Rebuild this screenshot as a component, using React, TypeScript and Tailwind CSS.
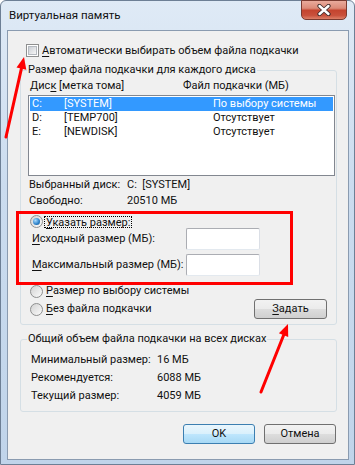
import React from 'react'

function U({ children }: { children: React.ReactNode }) {
  return <span className="underline underline-offset-[2px] decoration-[1px]">{children}</span>
}

function Checkbox() {
  return (
    <span className="w-[13px] h-[13px] shrink-0 border border-[#8e8f8f] bg-white p-[1px]">
      <span className="block w-full h-full border border-[#b4b9bf] bg-[linear-gradient(135deg,#cbcfd5,#f6f6f6)]" />
    </span>
  )
}

function Radio({ checked = false }: { checked?: boolean }) {
  return (
    <span className="w-[13px] h-[13px] shrink-0 rounded-full border border-[#8e8f8f] bg-[linear-gradient(135deg,#d2d2d2,#fbfbfb)] flex items-center justify-center">
      {checked && (
        <span className="w-[7px] h-[7px] rounded-full bg-[radial-gradient(circle_at_35%_35%,#a9dcff,#2a7fc8_60%,#17507f)]" />
      )}
    </span>
  )
}

function Btn({ children, primary = false, className = '' }: { children: React.ReactNode; primary?: boolean; className?: string }) {
  return (
    <div
      className={
        (primary
          ? 'border-[#3c7fb1] bg-[linear-gradient(to_bottom,#eaf6fd_0%,#d9f0fc_50%,#bee6fd_51%,#a7d9f5_100%)] '
          : 'border-[#707070] bg-[linear-gradient(to_bottom,#f2f2f2_0%,#ebebeb_50%,#dddddd_51%,#cfcfcf_100%)] ') +
        'h-[20px] rounded-[3px] border flex items-center justify-center ' +
        className
      }
    >
      <span>{children}</span>
    </div>
  )
}

function Input() {
  return <div className="w-[74px] h-[22px] shrink-0 rounded-[2px] border border-[#abadb3] border-b-[#e3e9ef] border-r-[#dbdfe6] bg-white" />
}

export default function App() {
  const drives = [
    { d: 'C:', label: '[SYSTEM]', file: 'По выбору системы', sel: true },
    { d: 'D:', label: '[TEMP700]', file: 'Отсутствует', sel: false },
    { d: 'E:', label: '[NEWDISK]', file: 'Отсутствует', sel: false },
  ]

  return (
    <div className="relative w-[355px] h-[465px] overflow-hidden whitespace-nowrap font-['Roboto','Noto_Sans',sans-serif] text-[11px] leading-[14px] text-[#111] bg-white">
      <div className="w-full h-full flex flex-col rounded-t-[6px] border border-[#6d7f95] bg-[linear-gradient(to_bottom,#dfeaf6,#cbdcef_40%,#c0d4ea)]">
        {/* title bar */}
        <div className="h-[29px] shrink-0 flex items-start justify-between">
          <span className="mt-[7px] ml-[8px] text-[11.5px]">Виртуальная память</span>
          <div className="-mt-[1px] mr-[7px] w-[46px] h-[20px] rounded-b-[5px] border border-[#7a3a30] bg-[linear-gradient(to_bottom,#e9aa9c,#dc8a78_40%,#c4442f_52%,#c9513c_80%,#dd8068)] flex items-center justify-center">
            <svg width="14" height="12" viewBox="0 0 14 12">
              <path d="M2.5 2 L11.5 10 M11.5 2 L2.5 10" stroke="#3d2a2a" strokeWidth="4.2" strokeLinecap="round" />
              <path d="M2.5 2 L11.5 10 M11.5 2 L2.5 10" stroke="#ffffff" strokeWidth="2.4" strokeLinecap="round" />
            </svg>
          </div>
        </div>

        {/* client area */}
        <div className="ml-[6px] w-[342px] h-[430px] border border-[#8a9bb0] bg-[#f0f0f0] pl-[12px] pr-[11px] flex flex-col">
          <div className="mt-[13px] ml-[6px] h-[13px] flex items-center gap-[3px]">
            <Checkbox />
            <span>
              <U>А</U>втоматически выбирать объем файла подкачки
            </span>
          </div>

          {/* per-disk group */}
          <fieldset className="mt-[6px] m-0 p-0 pb-[5px] min-w-0 border border-[#d5dfe5] rounded-[3px]">
            <legend className="ml-[6px] px-[1px] leading-[14px]">Размер файла подкачки для каждого диска</legend>

            <div className="mt-[2px] ml-[9px] h-[14px] flex">
              <span className="w-[153px] shrink-0">
                Дис<U>к</U> [метка тома]
              </span>
              <span>Файл подкачки (МБ)</span>
            </div>

            <div className="mt-[2px] ml-[7px] w-[307px] h-[81px] border border-[#828790] bg-white pt-[1px] px-[1px]">
              {drives.map((r) => (
                <div
                  key={r.d}
                  className={(r.sel ? 'bg-[#3399ff] text-white ' : '') + 'h-[14px] pl-[2px] flex items-center'}
                >
                  <span className="w-[32px] shrink-0">{r.d}</span>
                  <span className="w-[149px] shrink-0">{r.label}</span>
                  <span>{r.file}</span>
                </div>
              ))}
            </div>

            <div className="mt-[1px] ml-[8px] h-[16px] flex items-center">
              <span className="w-[98px] shrink-0">Выбранный диск:</span>
              <span>C:&nbsp;&nbsp;[SYSTEM]</span>
            </div>
            <div className="ml-[8px] h-[16px] flex items-center">
              <span className="w-[98px] shrink-0">Свободно:</span>
              <span>20510 МБ</span>
            </div>

            <div className="mt-[6px] ml-[9px] h-[13px] flex items-center gap-[1px]">
              <Radio checked />
              <span className="border border-dotted border-black px-[1px] leading-[11px] h-[12px]">
                <U>У</U>казать размер:
              </span>
            </div>
            <div className="ml-[11px] h-[22px] flex items-center">
              <span className="w-[154px] shrink-0">
                <U>И</U>сходный размер (МБ):
              </span>
              <Input />
            </div>
            <div className="mt-[4px] ml-[11px] h-[22px] flex items-center">
              <span className="w-[154px] shrink-0">
                <U>М</U>аксимальный размер (МБ):
              </span>
              <Input />
            </div>

            <div className="mt-[8px] ml-[9px] h-[14px] flex items-center gap-[3px]">
              <Radio />
              <span>
                <U>Р</U>азмер по выбору системы
              </span>
            </div>
            <div className="mt-[1px] ml-[9px] mr-[9px] h-[20px] flex items-center justify-between">
              <div className="flex items-center gap-[3px]">
                <Radio />
                <span>
                  <U>Б</U>ез файла подкачки
                </span>
              </div>
              <Btn className="w-[73px]">
                <U>З</U>адать
              </Btn>
            </div>
          </fieldset>

          {/* totals group */}
          <fieldset className="mt-[7px] m-0 p-0 pt-[5px] pb-[6px] min-w-0 border border-[#d5dfe5] rounded-[3px]">
            <legend className="ml-[6px] px-[1px] leading-[14px]">Общий объем файла подкачки на всех дисках</legend>
            {[
              ['Минимальный размер:', '16 МБ'],
              ['Рекомендуется:', '6088 МБ'],
              ['Текущий размер:', '4059 МБ'],
            ].map(([k, v]) => (
              <div key={k} className="ml-[10px] h-[18px] flex items-center">
                <span className="w-[126px] shrink-0">{k}</span>
                <span>{v}</span>
              </div>
            ))}
          </fieldset>

          <div className="mt-[12px] pr-[1px] flex justify-end gap-[9px]">
            <Btn primary className="w-[72px]">
              OK
            </Btn>
            <Btn className="w-[72px]">Отмена</Btn>
          </div>
        </div>
      </div>

      {/* red annotations */}
      <div className="absolute left-[16px] top-[211px] w-[277px] h-[74px] border-[3px] border-[#ff0000] pointer-events-none" />
      <svg className="absolute left-0 top-0 pointer-events-none" width="355" height="465" viewBox="0 0 355 465">
        <line x1="6" y1="137" x2="21.4" y2="68.7" stroke="#ff0000" strokeWidth="3" strokeLinecap="round" />
        <polygon points="24,57 26.3,69.8 16.5,67.6" fill="#ff0000" />
        <line x1="261" y1="392" x2="283.6" y2="335.2" stroke="#ff0000" strokeWidth="3" strokeLinecap="round" />
        <polygon points="288,324 288.2,337 278.9,333.3" fill="#ff0000" />
      </svg>
    </div>
  )
}
